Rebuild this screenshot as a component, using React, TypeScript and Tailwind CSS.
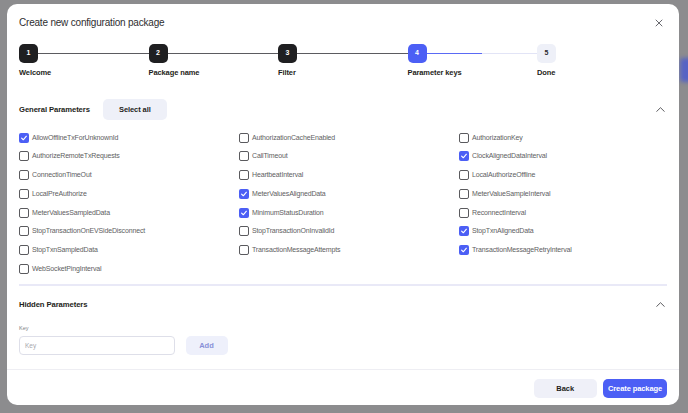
import React from "react";

const cols: [string, boolean][][] = [
  [
    ["AllowOfflineTxForUnknownId", true],
    ["AuthorizeRemoteTxRequests", false],
    ["ConnectionTimeOut", false],
    ["LocalPreAuthorize", false],
    ["MeterValuesSampledData", false],
    ["StopTransactionOnEVSideDisconnect", false],
    ["StopTxnSampledData", false],
    ["WebSocketPingInterval", false],
  ],
  [
    ["AuthorizationCacheEnabled", false],
    ["CallTimeout", false],
    ["HeartbeatInterval", false],
    ["MeterValuesAlignedData", true],
    ["MinimumStatusDuration", true],
    ["StopTransactionOnInvalidId", false],
    ["TransactionMessageAttempts", false],
  ],
  [
    ["AuthorizationKey", false],
    ["ClockAlignedDataInterval", true],
    ["LocalAuthorizeOffline", false],
    ["MeterValueSampleInterval", false],
    ["ReconnectInterval", false],
    ["StopTxnAlignedData", true],
    ["TransactionMessageRetryInterval", true],
  ],
];

function Check({ label, checked }: { label: string; checked: boolean }) {
  return (
    <div className="flex h-[18.75px] items-center">
      {checked ? (
        <div className="flex h-[10px] w-[10px] items-center justify-center rounded-[2px] bg-[#4c5ff5]">
          <svg width="8" height="8" viewBox="0 0 10 10" fill="none">
            <path d="M2 5.2L4.1 7.2L8 2.8" stroke="white" strokeWidth="1.4" strokeLinecap="round" strokeLinejoin="round" />
          </svg>
        </div>
      ) : (
        <div className="h-[10px] w-[10px] rounded-[2px] border border-[#5a5a5e] bg-white" />
      )}
      <span className="ml-[3px] text-[7px] leading-[10px] tracking-[-0.15px] text-[#5e5e62]">{label}</span>
    </div>
  );
}

function Chevron() {
  return (
    <svg width="9" height="5" viewBox="0 0 9 5" fill="none">
      <path d="M0.7 4.4L4.5 0.7L8.3 4.4" stroke="#4a4a4e" strokeWidth="0.9" strokeLinecap="round" strokeLinejoin="round" />
    </svg>
  );
}

const steps = ["Welcome", "Package name", "Filter", "Parameter keys", "Done"];

export default function App() {
  const rows = 8;
  return (
    <div
      className="relative h-[413px] w-[688px] overflow-hidden bg-[#8c8c8e] pl-[7px] pt-[4px]"
      style={{ fontFamily: '"Liberation Sans", Arial, sans-serif' }}
    >
      <div className="absolute right-[-6px] top-[58px] h-[24px] w-[14px] rounded-[4px] bg-[#5563c4] blur-[2px]" />
      <div className="relative flex h-[401px] w-[672px] flex-col rounded-[10px] bg-white">
        {/* header */}
        <div className="flex items-center justify-between px-[12px] pt-[13px]">
          <div className="text-[10px] leading-[12px] tracking-[-0.2px] text-[#2e2e30]">Create new configuration package</div>
          <svg width="8" height="8" viewBox="0 0 8 8" className="mr-[4px]" fill="none">
            <path d="M1 1L7 7M7 1L1 7" stroke="#6a6a70" strokeWidth="1" strokeLinecap="round" />
          </svg>
        </div>

        {/* stepper */}
        <div className="mt-[15px] flex px-[12px]">
          {steps.map((s, i) => {
            const last = i === steps.length - 1;
            const active = i === 3;
            const done = i < 3;
            return (
              <div key={s} className={last ? "flex flex-col" : "flex w-[129.5px] flex-col"}>
                <div className="flex items-center">
                  <div
                    className={
                      done
                        ? "flex h-[19px] w-[19px] shrink-0 items-center justify-center rounded-[5px] bg-[#1f1f21] text-[7px] font-bold text-white"
                        : active
                        ? "flex h-[19px] w-[19px] shrink-0 items-center justify-center rounded-[5px] bg-[#4c5ff5] text-[7px] font-bold text-white"
                        : "flex h-[19px] w-[19px] shrink-0 items-center justify-center rounded-[5px] bg-[#eef0f8] text-[7px] font-bold text-[#2a2a2e]"
                    }
                  >
                    {i + 1}
                  </div>
                  {!last &&
                    (active ? (
                      <div className="flex flex-1">
                        <div className="h-[1px] w-[55px] bg-[#5a6af5]" />
                        <div className="h-[1px] flex-1 bg-[#e2e4f6]" />
                      </div>
                    ) : (
                      <div className="h-[1px] flex-1 bg-[#5b5b60]" />
                    ))}
                </div>
                <div className="mt-[5px] text-[7.5px] font-bold leading-[10px] tracking-[-0.1px] text-[#1e1e20]">{s}</div>
              </div>
            );
          })}
        </div>

        {/* general parameters */}
        <div className="mt-[21px] flex h-[21px] items-center justify-between px-[12px]">
          <div className="flex items-center">
            <div className="text-[7.7px] font-bold tracking-[-0.1px] text-[#1e1e20]">General Parameters</div>
            <div className="ml-[13px] flex h-[21px] w-[64px] items-center justify-center rounded-[5px] bg-[#eef0f8] text-[7.5px] font-bold tracking-[-0.1px] text-[#1e1e20]">
              Select all
            </div>
          </div>
          <div className="mr-[2px]">
            <Chevron />
          </div>
        </div>

        <div className="mt-[8.3px] grid grid-cols-[220px_220px_1fr] px-[12px]" style={{ height: rows * 18.75 }}>
          {cols.map((c, ci) => (
            <div key={ci} className="flex flex-col">
              {c.map(([l, ch]) => (
                <Check key={l} label={l} checked={ch} />
              ))}
            </div>
          ))}
        </div>

        <div className="mx-[12px] mt-[6px] h-[2px] bg-[#e9e9f7]" />

        {/* hidden parameters */}
        <div className="mt-[13.5px] flex h-[10px] items-center justify-between px-[12px]">
          <div className="text-[7.7px] font-bold tracking-[-0.1px] text-[#1e1e20]">Hidden Parameters</div>
          <div className="mr-[2px]">
            <Chevron />
          </div>
        </div>
        <div className="mt-[14.7px] px-[12px] text-[5.5px] leading-[8px] text-[#808084]">Key</div>
        <div className="mt-[3.3px] flex items-center px-[12px]">
          <div className="flex h-[19.5px] w-[156px] items-center rounded-[4px] border border-[#dedfe9] px-[5px] text-[6.5px] text-[#a8a8ae]">
            Key
          </div>
          <div className="ml-[10.5px] flex h-[19.5px] w-[42px] items-center justify-center rounded-[5px] bg-[#eef0fb] text-[7.5px] font-bold text-[#8890d8]">
            Add
          </div>
        </div>

        {/* footer */}
        <div className="mt-auto flex h-[36px] justify-end gap-[6px] border-t border-[#eeeef3] px-[12px] pt-[8.5px]">
          <div className="flex h-[19.5px] w-[63.5px] items-center justify-center rounded-[5px] bg-[#eff0f8] text-[7.5px] font-bold text-[#1e1e20]">
            Back
          </div>
          <div className="flex h-[19.5px] w-[64px] items-center justify-center rounded-[5px] bg-[#4c5ff5] text-[7.5px] font-bold tracking-[-0.1px] text-white">
            Create package
          </div>
        </div>
      </div>
    </div>
  );
}
